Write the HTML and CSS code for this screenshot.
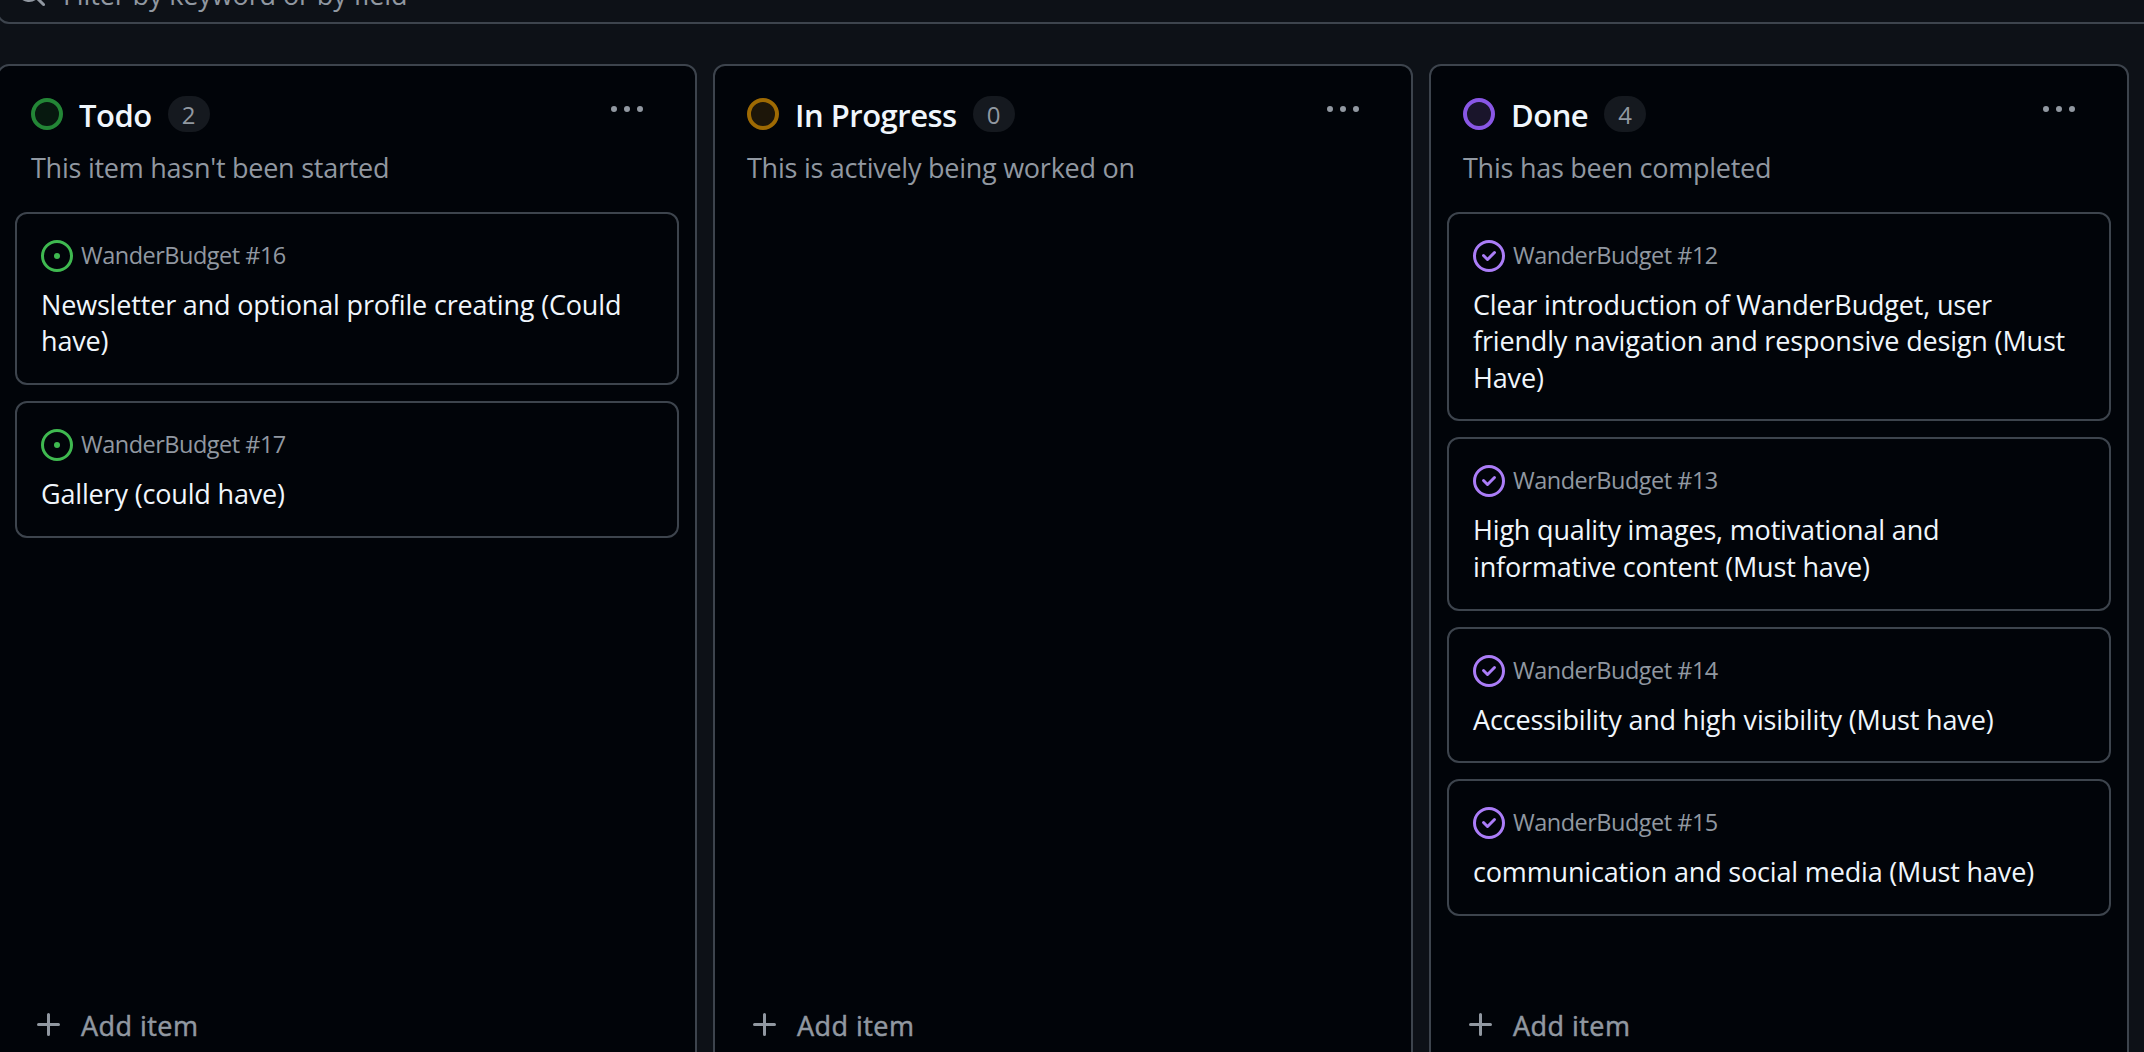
FILE: index.html
```html
<!DOCTYPE html>
<html lang="en">
<head>
<meta charset="utf-8">
<title>WanderBudget board</title>
<link rel="stylesheet" href="styles.css">
</head>
<body>
<svg class="sprite" aria-hidden="true">
  <symbol id="search" viewBox="0 0 16 16"><path d="M10.68 11.74a6 6 0 0 1-7.922-8.982 6 6 0 0 1 8.982 7.922l3.04 3.04a.749.749 0 0 1-.326 1.275.749.749 0 0 1-.734-.215ZM11.5 7a4.499 4.499 0 1 0-8.997 0A4.499 4.499 0 0 0 11.5 7Z"/></symbol>
  <symbol id="kebab" viewBox="0 0 16 16"><path d="M8 9a1.5 1.5 0 1 0 0-3 1.5 1.5 0 0 0 0 3ZM1.5 9a1.5 1.5 0 1 0 0-3 1.5 1.5 0 0 0 0 3Zm13 0a1.5 1.5 0 1 0 0-3 1.5 1.5 0 0 0 0 3Z"/></symbol>
  <symbol id="open" viewBox="0 0 16 16"><path d="M8 9.5a1.5 1.5 0 1 0 0-3 1.5 1.5 0 0 0 0 3Z"/><path d="M8 0a8 8 0 1 1 0 16A8 8 0 0 1 8 0ZM1.5 8a6.5 6.5 0 1 0 13 0 6.5 6.5 0 0 0-13 0Z"/></symbol>
  <symbol id="closed" viewBox="0 0 16 16"><path d="M11.28 6.78a.75.75 0 0 0-1.06-1.06L7.25 8.69 5.78 7.22a.75.75 0 0 0-1.06 1.06l2 2a.75.75 0 0 0 1.06 0l3.5-3.5Z"/><path d="M16 8A8 8 0 1 1 0 8a8 8 0 0 1 16 0Zm-1.5 0a6.5 6.5 0 1 0-13 0 6.5 6.5 0 0 0 13 0Z"/></symbol>
  <symbol id="plus" viewBox="0 0 16 16"><path d="M7.75 2a.75.75 0 0 1 .75.75V7h4.25a.75.75 0 0 1 0 1.5H8.5v4.25a.75.75 0 0 1-1.5 0V8.5H2.75a.75.75 0 0 1 0-1.5H7V2.75A.75.75 0 0 1 7.75 2Z"/></symbol>
</svg>
<div class="filter"><svg class="icon"><use href="#search"/></svg><span class="filter-text">Filter by keyword or by field</span></div>
<main class="board">
  <section class="column">
    <header class="head">
      <span class="ring ring-green"></span><h2 class="name">Todo</h2><span class="count">2</span>
      <svg class="menu"><use href="#kebab"/></svg>
    </header>
    <p class="about">This item hasn't been started</p>
    <div class="cards">
      <article class="card"><div class="ref"><svg class="icon is-open"><use href="#open"/></svg><span class="ref-text">WanderBudget #16</span></div><h3 class="title">Newsletter and optional profile creating (Could<br>have)</h3></article>
      <article class="card"><div class="ref"><svg class="icon is-open"><use href="#open"/></svg><span class="ref-text">WanderBudget #17</span></div><h3 class="title">Gallery (could have)</h3></article>
    </div>
    <div class="add"><svg class="icon"><use href="#plus"/></svg><span>Add item</span></div>
  </section>
  <section class="column">
    <header class="head">
      <span class="ring ring-yellow"></span><h2 class="name">In Progress</h2><span class="count">0</span>
      <svg class="menu"><use href="#kebab"/></svg>
    </header>
    <p class="about">This is actively being worked on</p>
    <div class="cards"></div>
    <div class="add"><svg class="icon"><use href="#plus"/></svg><span>Add item</span></div>
  </section>
  <section class="column">
    <header class="head">
      <span class="ring ring-purple"></span><h2 class="name">Done</h2><span class="count">4</span>
      <svg class="menu"><use href="#kebab"/></svg>
    </header>
    <p class="about">This has been completed</p>
    <div class="cards">
      <article class="card"><div class="ref"><svg class="icon is-closed"><use href="#closed"/></svg><span class="ref-text">WanderBudget #12</span></div><h3 class="title">Clear introduction of WanderBudget, user<br>friendly navigation and responsive design (Must<br>Have)</h3></article>
      <article class="card"><div class="ref"><svg class="icon is-closed"><use href="#closed"/></svg><span class="ref-text">WanderBudget #13</span></div><h3 class="title">High quality images, motivational and<br>informative content (Must have)</h3></article>
      <article class="card"><div class="ref"><svg class="icon is-closed"><use href="#closed"/></svg><span class="ref-text">WanderBudget #14</span></div><h3 class="title">Accessibility and high visibility (Must have)</h3></article>
      <article class="card"><div class="ref"><svg class="icon is-closed"><use href="#closed"/></svg><span class="ref-text">WanderBudget #15</span></div><h3 class="title">communication and social media (Must have)</h3></article>
    </div>
    <div class="add"><svg class="icon"><use href="#plus"/></svg><span>Add item</span></div>
  </section>
</main>
</body>
</html>
```
FILE: styles.css
```css
* { box-sizing: border-box; }
html { height: 100%; overflow: hidden; }
body {
  margin: 0;
  height: 1052px;
  overflow: hidden;
  display: flex;
  flex-direction: column;
  background: #0d1117;
  color: #f0f6fc;
  font-family: "Open Sans", "Noto Sans", sans-serif;
  font-size: 28px;
}
h2, h3, p { margin: 0; font-weight: 400; }
.sprite { display: none; }
.icon { width: 32px; height: 32px; flex: none; fill: #9198a1; }
.is-open { fill: #3fb950; }
.is-closed { fill: #ab7df8; }

.filter {
  flex: none;
  height: 64px;
  margin: -40px -20px 0 -3px;
  padding-left: 16px;
  display: flex;
  align-items: center;
  gap: 16px;
  border: 2px solid #3d444d;
  border-radius: 12px;
  color: #9198a1;
  white-space: nowrap;
}
.filter-text { padding-top: 6px; font-size: 27px; line-height: 40px; letter-spacing: -0.12px; }

.board {
  flex: none;
  display: flex;
  gap: 16px;
  margin: 40px 0 0 -3px;
  height: 1010px;
}
.column {
  flex: none;
  width: 700px;
  display: flex;
  flex-direction: column;
  border: 2px solid #3d444d;
  border-radius: 12px;
  background: #010409;
  white-space: nowrap;
}
.head { display: flex; align-items: center; height: 36px; margin: 30px 40px 0 32px; }
.ring { width: 32px; height: 32px; border: 4px solid; border-radius: 50%; }
.ring-green { border-color: #238636; background: #07190f; }
.ring-yellow { border-color: #9e6a03; background: #1d1609; }
.ring-purple { border-color: #8957e5; background: #1a152b; }
.name { margin-left: 16px; padding-top: 1px; font-size: 31px; line-height: 40px; font-weight: 600; letter-spacing: -0.5px; }
.count {
  margin-left: 16px;
  width: 42px;
  height: 36px;
  border-radius: 18px;
  background: #15191f;
  color: #9198a1;
  font-size: 24px;
  line-height: 37px;
  text-align: center;
}
.menu { width: 32px; height: 32px; margin: -8px 12px 0 auto; fill: #9198a1; }
.about { margin: 15px 32px 0; color: #9198a1; font-size: 27px; line-height: 42px; letter-spacing: -0.25px; }

.cards { display: flex; flex-direction: column; gap: 16px; margin: 23px 16px 0; }
.card {
  padding: 24px 24px 23.5px;
  border: 2px solid #3d444d;
  border-radius: 12px;
}
.ref { display: flex; align-items: center; gap: 8px; height: 36px; color: #9198a1; }
.ref-text { padding-bottom: 2px; font-size: 23.5px; line-height: 32px; letter-spacing: -0.5px; }
.title { margin-top: 13px; font-size: 27px; line-height: 36.33px; letter-spacing: -0.17px; }
.add { display: flex; align-items: center; gap: 16px; height: 40px; margin: auto 0 27px 34px; color: #9198a1; font-size: 27px; letter-spacing: 0.45px; -webkit-text-stroke: 0.5px #9198a1; }
```
